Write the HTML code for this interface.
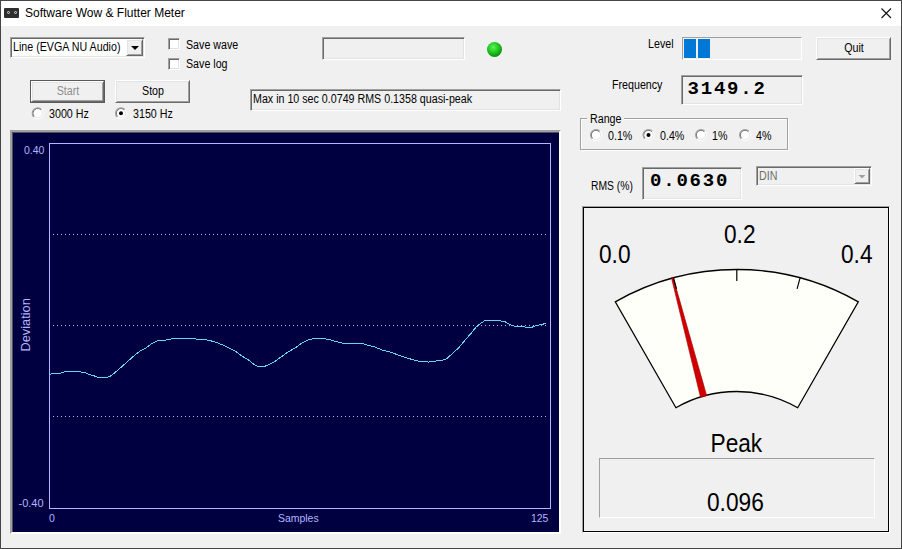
<!DOCTYPE html><html><head><meta charset="utf-8"><style>
html,body{margin:0;padding:0;}
body{width:902px;height:549px;overflow:hidden;position:relative;background:#f0f0f0;font-family:'Liberation Sans',sans-serif;}
.t{position:absolute;white-space:pre;}
.b{position:absolute;}
svg{position:absolute;left:0;top:0;}
</style></head><body>
<div class="b" style="left:0px;top:0px;width:902px;height:549px;border:1px solid #464646;box-sizing:border-box;"></div>
<div class="b" style="left:1px;top:1px;width:900px;height:25px;background:#fff;"></div>
<div class="b" style="left:4px;top:8px;width:15px;height:10px;background:#2e2e2e;border-radius:1px;"></div>
<div class="b" style="left:7px;top:11px;width:3px;height:3px;border:1px solid #ddd;border-radius:50%;box-sizing:border-box;"></div>
<div class="b" style="left:14px;top:11px;width:3px;height:3px;border:1px solid #ddd;border-radius:50%;box-sizing:border-box;"></div>
<div class="t" style="left:25.00px;top:7.14px;font-size:12px;line-height:12px;color:#000;font-family:'Liberation Sans', sans-serif;font-weight:normal;">Software Wow &amp; Flutter Meter</div>
<svg width="902" height="549" style="pointer-events:none"><path d="M881.5 8.5 L891 18 M891 8.5 L881.5 18" stroke="#111" stroke-width="1.1" fill="none"/></svg>
<div class="b" style="left:10px;top:37px;width:135px;height:21px;border:1px solid;border-color:#a0a0a0 #fff #fff #a0a0a0;box-shadow:inset 1px 1px #696969, inset -1px -1px #e3e3e3;box-sizing:border-box;background:#fff;"></div>
<div class="t" style="left:13.00px;top:40.74px;font-size:12px;line-height:12px;color:#000;font-family:'Liberation Sans', sans-serif;font-weight:normal;transform:scale(0.89,1);transform-origin:0 10.16px;">Line (EVGA NU Audio)</div>
<div class="b" style="left:126px;top:39px;width:17px;height:17px;border:1px solid;border-color:#fff #696969 #696969 #fff;box-shadow:inset 1px 1px #e3e3e3, inset -1px -1px #a0a0a0;box-sizing:border-box;background:#f0f0f0;"></div>
<svg width="902" height="549"><path d="M131 46 L139 46 L135 50 Z" fill="#000"/></svg>
<div class="b" style="left:168px;top:38px;width:12px;height:12px;border:1px solid;border-color:#a0a0a0 #fff #fff #a0a0a0;box-shadow:inset 1px 1px #696969, inset -1px -1px #e3e3e3;box-sizing:border-box;background:#fff;"></div>
<div class="t" style="left:186.00px;top:38.94px;font-size:12px;line-height:12px;color:#000;font-family:'Liberation Sans', sans-serif;font-weight:normal;transform:scale(0.89,1);transform-origin:0 10.16px;">Save wave</div>
<div class="b" style="left:168px;top:58px;width:12px;height:12px;border:1px solid;border-color:#a0a0a0 #fff #fff #a0a0a0;box-shadow:inset 1px 1px #696969, inset -1px -1px #e3e3e3;box-sizing:border-box;background:#fff;"></div>
<div class="t" style="left:186.00px;top:58.44px;font-size:12px;line-height:12px;color:#000;font-family:'Liberation Sans', sans-serif;font-weight:normal;transform:scale(0.89,1);transform-origin:0 10.16px;">Save log</div>
<div class="b" style="left:30px;top:80px;width:75px;height:23px;border:1px solid #5a5a5a;box-sizing:border-box;"></div>
<div class="b" style="left:31px;top:81px;width:73px;height:21px;border:1px solid;border-color:#fff #696969 #696969 #fff;box-shadow:inset 1px 1px #e3e3e3, inset -1px -1px #a0a0a0;box-sizing:border-box;background:#f0f0f0;"></div>
<div class="t" style="left:-32.50px;width:200px;text-align:center;top:85.14px;font-size:12px;line-height:12px;color:#8d8d8d;font-family:'Liberation Sans', sans-serif;font-weight:normal;transform:scale(0.89,1);transform-origin:50% 10.16px;">Start</div>
<div class="b" style="left:115px;top:80px;width:75px;height:23px;border:1px solid;border-color:#fff #696969 #696969 #fff;box-shadow:inset 1px 1px #e3e3e3, inset -1px -1px #a0a0a0;box-sizing:border-box;background:#f0f0f0;"></div>
<div class="t" style="left:52.50px;width:200px;text-align:center;top:85.14px;font-size:12px;line-height:12px;color:#000;font-family:'Liberation Sans', sans-serif;font-weight:normal;transform:scale(0.89,1);transform-origin:50% 10.16px;">Stop</div>
<svg width="902" height="549"><g transform="translate(37.7,113.3)"><path d="M-5.5 0 A5.5 5.5 0 0 1 5.5 0" transform="rotate(-45)" stroke="#a0a0a0" stroke-width="1" fill="none"/><path d="M5.5 0 A5.5 5.5 0 0 1 -5.5 0" transform="rotate(-45)" stroke="#fff" stroke-width="1" fill="none"/><path d="M-4.5 0 A4.5 4.5 0 0 1 4.5 0" transform="rotate(-45)" stroke="#696969" stroke-width="1" fill="none"/><path d="M4.5 0 A4.5 4.5 0 0 1 -4.5 0" transform="rotate(-45)" stroke="#e3e3e3" stroke-width="1" fill="none"/><circle r="4" fill="#fff"/></g></svg>
<div class="t" style="left:49.00px;top:108.04px;font-size:12px;line-height:12px;color:#000;font-family:'Liberation Sans', sans-serif;font-weight:normal;transform:scale(0.89,1);transform-origin:0 10.16px;">3000 Hz</div>
<svg width="902" height="549"><g transform="translate(121,113.3)"><path d="M-5.5 0 A5.5 5.5 0 0 1 5.5 0" transform="rotate(-45)" stroke="#a0a0a0" stroke-width="1" fill="none"/><path d="M5.5 0 A5.5 5.5 0 0 1 -5.5 0" transform="rotate(-45)" stroke="#fff" stroke-width="1" fill="none"/><path d="M-4.5 0 A4.5 4.5 0 0 1 4.5 0" transform="rotate(-45)" stroke="#696969" stroke-width="1" fill="none"/><path d="M4.5 0 A4.5 4.5 0 0 1 -4.5 0" transform="rotate(-45)" stroke="#e3e3e3" stroke-width="1" fill="none"/><circle r="4" fill="#fff"/><circle r="2" fill="#000"/></g></svg>
<div class="t" style="left:132.50px;top:108.04px;font-size:12px;line-height:12px;color:#000;font-family:'Liberation Sans', sans-serif;font-weight:normal;transform:scale(0.89,1);transform-origin:0 10.16px;">3150 Hz</div>
<div class="b" style="left:322px;top:37px;width:143px;height:23px;border:1px solid;border-color:#a0a0a0 #fff #fff #a0a0a0;box-shadow:inset 1px 1px #696969, inset -1px -1px #e3e3e3;box-sizing:border-box;"></div>
<div class="b" style="left:487px;top:42px;width:15px;height:15px;border-radius:50%;background:radial-gradient(circle at 42% 35%, #5af55a 0%, #22c822 40%, #0c900c 72%, #055a05 100%);"></div>
<div class="b" style="left:250px;top:89px;width:311px;height:22px;border:1px solid;border-color:#a0a0a0 #fff #fff #a0a0a0;box-shadow:inset 1px 1px #696969, inset -1px -1px #e3e3e3;box-sizing:border-box;"></div>
<div class="t" style="left:253.00px;top:92.84px;font-size:12px;line-height:12px;color:#000;font-family:'Liberation Sans', sans-serif;font-weight:normal;transform:scale(0.89,1);transform-origin:0 10.16px;">Max in 10 sec 0.0749 RMS 0.1358 quasi-peak</div>
<div class="t" style="left:648.00px;top:38.14px;font-size:12px;line-height:12px;color:#000;font-family:'Liberation Sans', sans-serif;font-weight:normal;transform:scale(0.89,1);transform-origin:0 10.16px;">Level</div>
<div class="b" style="left:682px;top:37px;width:120px;height:23px;border:1px solid;border-color:#a0a0a0 #fff #fff #a0a0a0;box-sizing:border-box;"></div>
<div class="b" style="left:684px;top:39px;width:12px;height:19px;background:#0078d7;"></div>
<div class="b" style="left:698px;top:39px;width:12px;height:19px;background:#0078d7;"></div>
<div class="b" style="left:816px;top:37px;width:75px;height:23px;border:1px solid;border-color:#fff #696969 #696969 #fff;box-shadow:inset 1px 1px #e3e3e3, inset -1px -1px #a0a0a0;box-sizing:border-box;background:#f0f0f0;"></div>
<div class="t" style="left:753.50px;width:200px;text-align:center;top:42.34px;font-size:12px;line-height:12px;color:#000;font-family:'Liberation Sans', sans-serif;font-weight:normal;transform:scale(0.89,1);transform-origin:50% 10.16px;">Quit</div>
<div class="t" style="left:611.50px;top:78.94px;font-size:12px;line-height:12px;color:#000;font-family:'Liberation Sans', sans-serif;font-weight:normal;transform:scale(0.89,1);transform-origin:0 10.16px;">Frequency</div>
<div class="b" style="left:681px;top:75px;width:122px;height:30px;border:1px solid;border-color:#a0a0a0 #fff #fff #a0a0a0;box-shadow:inset 1px 1px #696969, inset -1px -1px #e3e3e3;box-sizing:border-box;"></div>
<div class="t" style="left:687.50px;top:80.34px;font-size:19px;line-height:19px;color:#000;font-family:'Liberation Mono', monospace;font-weight:bold;letter-spacing:1.8px;">3149.2</div>
<div class="b" style="left:580px;top:118px;width:208px;height:32px;border:1px solid #a0a0a0;box-shadow:inset 1px 1px #fff, 1px 1px #fff;box-sizing:border-box;"></div>
<div class="b" style="left:587px;top:112px;width:37px;height:10px;background:#f0f0f0;"></div>
<div class="t" style="left:589.50px;top:112.64px;font-size:12px;line-height:12px;color:#000;font-family:'Liberation Sans', sans-serif;font-weight:normal;transform:scale(0.89,1);transform-origin:0 10.16px;">Range</div>
<svg width="902" height="549"><g transform="translate(596,135)"><path d="M-5.5 0 A5.5 5.5 0 0 1 5.5 0" transform="rotate(-45)" stroke="#a0a0a0" stroke-width="1" fill="none"/><path d="M5.5 0 A5.5 5.5 0 0 1 -5.5 0" transform="rotate(-45)" stroke="#fff" stroke-width="1" fill="none"/><path d="M-4.5 0 A4.5 4.5 0 0 1 4.5 0" transform="rotate(-45)" stroke="#696969" stroke-width="1" fill="none"/><path d="M4.5 0 A4.5 4.5 0 0 1 -4.5 0" transform="rotate(-45)" stroke="#e3e3e3" stroke-width="1" fill="none"/><circle r="4" fill="#fff"/></g></svg>
<div class="t" style="left:607.50px;top:129.84px;font-size:12px;line-height:12px;color:#000;font-family:'Liberation Sans', sans-serif;font-weight:normal;transform:scale(0.89,1);transform-origin:0 10.16px;">0.1%</div>
<svg width="902" height="549"><g transform="translate(648.5,135)"><path d="M-5.5 0 A5.5 5.5 0 0 1 5.5 0" transform="rotate(-45)" stroke="#a0a0a0" stroke-width="1" fill="none"/><path d="M5.5 0 A5.5 5.5 0 0 1 -5.5 0" transform="rotate(-45)" stroke="#fff" stroke-width="1" fill="none"/><path d="M-4.5 0 A4.5 4.5 0 0 1 4.5 0" transform="rotate(-45)" stroke="#696969" stroke-width="1" fill="none"/><path d="M4.5 0 A4.5 4.5 0 0 1 -4.5 0" transform="rotate(-45)" stroke="#e3e3e3" stroke-width="1" fill="none"/><circle r="4" fill="#fff"/><circle r="2" fill="#000"/></g></svg>
<div class="t" style="left:660.00px;top:129.84px;font-size:12px;line-height:12px;color:#000;font-family:'Liberation Sans', sans-serif;font-weight:normal;transform:scale(0.89,1);transform-origin:0 10.16px;">0.4%</div>
<svg width="902" height="549"><g transform="translate(701,135)"><path d="M-5.5 0 A5.5 5.5 0 0 1 5.5 0" transform="rotate(-45)" stroke="#a0a0a0" stroke-width="1" fill="none"/><path d="M5.5 0 A5.5 5.5 0 0 1 -5.5 0" transform="rotate(-45)" stroke="#fff" stroke-width="1" fill="none"/><path d="M-4.5 0 A4.5 4.5 0 0 1 4.5 0" transform="rotate(-45)" stroke="#696969" stroke-width="1" fill="none"/><path d="M4.5 0 A4.5 4.5 0 0 1 -4.5 0" transform="rotate(-45)" stroke="#e3e3e3" stroke-width="1" fill="none"/><circle r="4" fill="#fff"/></g></svg>
<div class="t" style="left:712.00px;top:129.84px;font-size:12px;line-height:12px;color:#000;font-family:'Liberation Sans', sans-serif;font-weight:normal;transform:scale(0.89,1);transform-origin:0 10.16px;">1%</div>
<svg width="902" height="549"><g transform="translate(745,135)"><path d="M-5.5 0 A5.5 5.5 0 0 1 5.5 0" transform="rotate(-45)" stroke="#a0a0a0" stroke-width="1" fill="none"/><path d="M5.5 0 A5.5 5.5 0 0 1 -5.5 0" transform="rotate(-45)" stroke="#fff" stroke-width="1" fill="none"/><path d="M-4.5 0 A4.5 4.5 0 0 1 4.5 0" transform="rotate(-45)" stroke="#696969" stroke-width="1" fill="none"/><path d="M4.5 0 A4.5 4.5 0 0 1 -4.5 0" transform="rotate(-45)" stroke="#e3e3e3" stroke-width="1" fill="none"/><circle r="4" fill="#fff"/></g></svg>
<div class="t" style="left:755.50px;top:129.84px;font-size:12px;line-height:12px;color:#000;font-family:'Liberation Sans', sans-serif;font-weight:normal;transform:scale(0.89,1);transform-origin:0 10.16px;">4%</div>
<div class="t" style="left:590.50px;top:180.04px;font-size:12px;line-height:12px;color:#000;font-family:'Liberation Sans', sans-serif;font-weight:normal;transform:scale(0.86,1);transform-origin:0 10.16px;">RMS (%)</div>
<div class="b" style="left:642px;top:167px;width:100px;height:33px;border:1px solid;border-color:#a0a0a0 #fff #fff #a0a0a0;box-shadow:inset 1px 1px #696969, inset -1px -1px #e3e3e3;box-sizing:border-box;"></div>
<div class="t" style="left:650.00px;top:171.84px;font-size:19px;line-height:19px;color:#000;font-family:'Liberation Mono', monospace;font-weight:bold;letter-spacing:1.8px;">0.0630</div>
<div class="b" style="left:756px;top:166px;width:116px;height:20px;border:1px solid;border-color:#a0a0a0 #fff #fff #a0a0a0;box-shadow:inset 1px 1px #696969, inset -1px -1px #e3e3e3;box-sizing:border-box;"></div>
<div class="t" style="left:759.00px;top:169.84px;font-size:12px;line-height:12px;color:#6d6d6d;font-family:'Liberation Sans', sans-serif;font-weight:normal;transform:scale(0.89,1);transform-origin:0 10.16px;">DIN</div>
<div class="b" style="left:854px;top:168px;width:16px;height:16px;border:1px solid;border-color:#fff #696969 #696969 #fff;box-shadow:inset 1px 1px #e3e3e3, inset -1px -1px #a0a0a0;box-sizing:border-box;background:#f0f0f0;"></div>
<svg width="902" height="549"><path d="M858.5 175 L865.5 175 L862 178.5 Z" fill="#a0a0a0"/></svg>
<div class="b" style="left:582px;top:206px;width:308px;height:327px;border:1px solid;border-color:#a0a0a0 #fff #fff #a0a0a0;box-sizing:border-box;"></div>
<div class="b" style="left:583px;top:207px;width:306px;height:325px;border:1px solid #000;box-sizing:border-box;"></div>
<div class="t" style="left:599.00px;top:243.68px;font-size:22.7px;line-height:22.7px;color:#000;font-family:'Liberation Sans', sans-serif;font-weight:normal;transform:scale(1,1.1);transform-origin:0 19.22px;">0.0</div>
<div class="t" style="left:724.00px;top:223.58px;font-size:22.7px;line-height:22.7px;color:#000;font-family:'Liberation Sans', sans-serif;font-weight:normal;transform:scale(1,1.1);transform-origin:0 19.22px;">0.2</div>
<div class="t" style="left:841.00px;top:243.58px;font-size:22.7px;line-height:22.7px;color:#000;font-family:'Liberation Sans', sans-serif;font-weight:normal;transform:scale(1,1.1);transform-origin:0 19.22px;">0.4</div>
<div class="t" style="left:710.50px;top:432.68px;font-size:22.7px;line-height:22.7px;color:#000;font-family:'Liberation Sans', sans-serif;font-weight:normal;transform:scale(1,1.1);transform-origin:0 19.22px;">Peak</div>
<div class="b" style="left:599px;top:458px;width:276px;height:60px;border:1px solid;border-color:#a0a0a0 #fff #fff #a0a0a0;box-sizing:border-box;"></div>
<div class="t" style="left:707.00px;top:491.88px;font-size:22.7px;line-height:22.7px;color:#000;font-family:'Liberation Sans', sans-serif;font-weight:normal;transform:scale(1,1.1);transform-origin:0 19.22px;">0.096</div>
<svg width="902" height="549"><path d="M615.29 301.83 A244.5 244.5 0 0 1 858.31 301.83 L797.68 407.70 A122.5 122.5 0 0 0 675.92 407.70 Z" fill="#fffffa" stroke="#000" stroke-width="1.3"/><polygon points="671.43,277.83 673.17,277.37 706.69,395.69 700.51,397.31" fill="#d00000" stroke="#a00000" stroke-width="0.6"/><line x1="673.52" y1="277.83" x2="676.50" y2="288.94" stroke="#000" stroke-width="1.2"/><line x1="736.80" y1="269.50" x2="736.80" y2="281.00" stroke="#000" stroke-width="1.2"/><line x1="800.08" y1="277.83" x2="797.10" y2="288.94" stroke="#000" stroke-width="1.2"/></svg>
<div class="b" style="left:10px;top:130px;width:551px;height:404px;border-style:solid;border-width:2px 2px 2px 2px;border-color:#a0a0a0 #fff #fff #a0a0a0;box-sizing:border-box;box-shadow:inset -1px -1px #f4f4f4;"></div>
<div class="b" style="left:12px;top:132px;width:547px;height:400px;border-style:solid;border-width:1px 0 0 1px;border-color:#50505c;box-sizing:border-box;background:#000040;"></div>
<svg width="902" height="549"><rect x="49.5" y="143.5" width="501" height="365" fill="none" stroke="#b4b4ff" stroke-width="1"/><line x1="53" y1="234.5" x2="548" y2="234.5" stroke="#b4b4ff" stroke-width="1" stroke-dasharray="1 3"/><line x1="53" y1="325.5" x2="548" y2="325.5" stroke="#b4b4ff" stroke-width="1" stroke-dasharray="1 3"/><line x1="53" y1="416.5" x2="548" y2="416.5" stroke="#b4b4ff" stroke-width="1" stroke-dasharray="1 3"/><polyline points="49.4,374.3 52.8,373.5 60.5,373.2 65.5,371.6 77.2,371.6 84.4,372.3 88.2,374.3 93.8,375.7 98.2,377.4 107.6,377.4 111.5,375.5 118.2,369.9 125.9,363.0 133.7,356.0 140.3,351.0 145.5,348.3 152.2,343.3 158.3,340.3 165.0,340.3 173.3,338.5 181.6,338.5 201.5,339.2 209.8,340.5 216.5,342.5 222.0,344.7 228.7,347.7 235.3,351.0 241.7,356.0 248.3,359.9 255.0,365.1 258.8,366.6 264.4,366.6 268.3,364.7 274.9,361.4 281.6,356.6 288.2,351.9 294.9,348.1 301.5,343.3 308.2,340.0 313.7,338.5 321.5,338.5 329.2,339.4 335.5,341.4 342.2,343.1 362.2,343.6 368.8,345.5 375.5,347.2 382.1,350.0 388.8,351.6 395.4,354.0 402.1,356.3 408.7,358.5 417.6,361.0 425.3,361.6 428.3,362.1 436.1,361.0 443.8,359.9 447.2,358.4 453.8,352.1 458.3,348.2 464.9,340.3 471.6,332.7 476.0,327.2 479.3,324.4 484.9,320.5 497.1,320.5 504.4,321.4 508.7,323.9 513.1,325.8 517.5,326.8 532.0,327.2 534.2,326.3 537.9,325.4 542.2,324.3 546.2,323.4" fill="none" stroke="#68d4f4" stroke-width="1" shape-rendering="crispEdges"/></svg>
<div class="t" style="left:24.00px;top:144.69px;font-size:11px;line-height:11px;color:#b4b4ff;font-family:'Liberation Sans', sans-serif;font-weight:normal;transform:scale(0.95,1);transform-origin:0 9.31px;">0.40</div>
<div class="t" style="left:18.50px;top:497.79px;font-size:11px;line-height:11px;color:#b4b4ff;font-family:'Liberation Sans', sans-serif;font-weight:normal;">-0.40</div>
<div class="t" style="left:49.20px;top:512.89px;font-size:11px;line-height:11px;color:#b4b4ff;font-family:'Liberation Sans', sans-serif;font-weight:normal;transform:scale(0.95,1);transform-origin:0 9.31px;">0</div>
<div class="t" style="left:277.80px;top:512.89px;font-size:11px;line-height:11px;color:#b4b4ff;font-family:'Liberation Sans', sans-serif;font-weight:normal;transform:scale(0.95,1);transform-origin:0 9.31px;">Samples</div>
<div class="t" style="left:530.80px;top:512.69px;font-size:11px;line-height:11px;color:#b4b4ff;font-family:'Liberation Sans', sans-serif;font-weight:normal;transform:scale(0.95,1);transform-origin:0 9.31px;">125</div>
<div class="t" style="left:0;top:0;font-size:12.8px;line-height:12.8px;color:#b4b4ff;transform-origin:0 0;transform:translate(20.16px,351.5px) rotate(-90deg);">Deviation</div>
</body></html>
